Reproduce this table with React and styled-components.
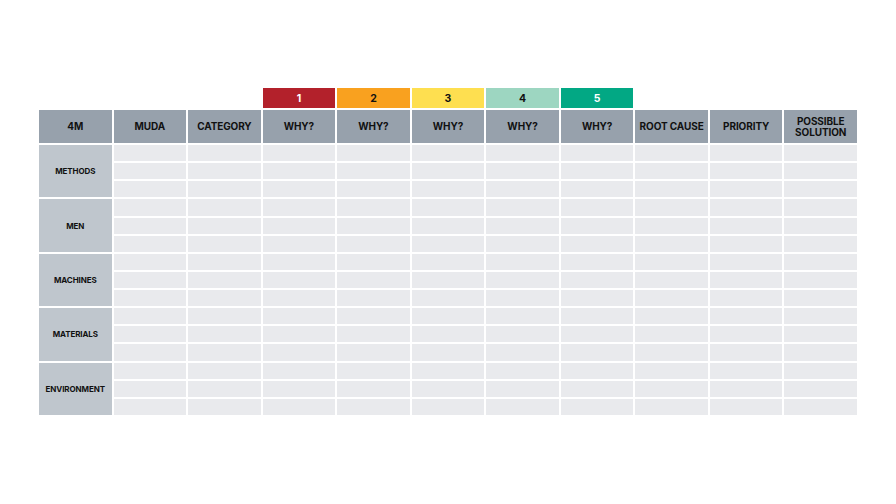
import React from "react";
import styled, { createGlobalStyle } from "styled-components";

const Global = createGlobalStyle`
  html, body { margin: 0; padding: 0; background: #ffffff; }
  body { font-family: Inter, "Noto Sans", "Liberation Sans", sans-serif; }
`;

const Page = styled.div`
  width: 896px;
  height: 504px;
  box-sizing: border-box;
  padding: 88px 0 0 39px;
`;

const Grid = styled.div`
  display: grid;
  width: 818px;
  height: 327px;
  grid-template-columns: repeat(11, 1fr);
  grid-template-rows: 20px 33px repeat(15, 1fr);
  column-gap: 2px;
  row-gap: 2px;
`;

const Spacer = styled.div``;

const Step = styled.div`
  background: ${(p) => p.$bg};
  color: ${(p) => p.$fg};
  display: flex;
  align-items: center;
  justify-content: center;
  font-size: 10.5px;
  font-weight: 700;
`;

const Head = styled.div`
  background: #97a1ac;
  color: #111;
  display: flex;
  align-items: center;
  justify-content: center;
  text-align: center;
  font-size: 10px;
  font-weight: 700;
  line-height: 10.5px;
  letter-spacing: -0.1px;
`;

const Group = styled.div`
  grid-row: span 3;
  background: #bfc6cd;
  color: #111;
  display: flex;
  align-items: center;
  justify-content: center;
  font-size: 8px;
  font-weight: 700;
  letter-spacing: -0.1px;
`;

const Cell = styled.div`
  background: #e9eaed;
`;

const steps = [
  { n: "1", bg: "#b3212b", fg: "#ffffff" },
  { n: "2", bg: "#f9a11f", fg: "#111" },
  { n: "3", bg: "#fedf50", fg: "#111" },
  { n: "4", bg: "#9dd6c1", fg: "#111" },
  { n: "5", bg: "#02a884", fg: "#ffffff" },
];

const heads = [
  "4M",
  "MUDA",
  "CATEGORY",
  "WHY?",
  "WHY?",
  "WHY?",
  "WHY?",
  "WHY?",
  "ROOT CAUSE",
  "PRIORITY",
  ["POSSIBLE", "SOLUTION"],
];

const groups = ["METHODS", "MEN", "MACHINES", "MATERIALS", "ENVIRONMENT"];

export default function App() {
  const body = [];
  groups.forEach((g) => {
    for (let r = 0; r < 3; r++) {
      if (r === 0) body.push(<Group key={g}>{g}</Group>);
      for (let c = 0; c < 10; c++) body.push(<Cell key={`${g}-${r}-${c}`} />);
    }
  });
  return (
    <Page>
      <Global />
      <Grid>
        <Spacer />
        <Spacer />
        <Spacer />
        {steps.map((s) => (
          <Step key={s.n} $bg={s.bg} $fg={s.fg}>
            {s.n}
          </Step>
        ))}
        <Spacer />
        <Spacer />
        <Spacer />
        {heads.map((h, i) => (
          <Head key={i}>
            {Array.isArray(h) ? (
              <span>
                {h[0]}
                <br />
                {h[1]}
              </span>
            ) : (
              h
            )}
          </Head>
        ))}
        {body}
      </Grid>
    </Page>
  );
}
